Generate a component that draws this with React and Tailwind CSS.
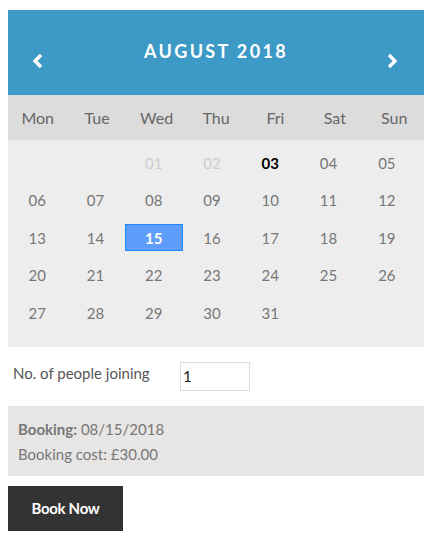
const days = ['Mon', 'Tue', 'Wed', 'Thu', 'Fri', 'Sat', 'Sun'];

const cells = [
  null, null, 1, 2, 3, 4, 5,
  ...Array.from({ length: 26 }, (_, i) => i + 6),
  null, null,
];

const pad = (n) => (n < 10 ? `0${n}` : `${n}`);

const DayCell = ({ n }) => {
  if (n === null) return <div className="h-[37.5px]" />;
  let cls = 'text-[#777]';
  if (n < 3) cls = 'text-[#ccc]';
  if (n === 3) cls = 'text-black font-bold';
  if (n === 15) {
    return (
      <div className="h-[37.5px] flex items-center justify-center">
        <div className="w-[58px] h-[27px] bg-[#5f9dfa] border border-[#1f87ff] text-white font-bold flex items-center justify-center">
          {pad(n)}
        </div>
      </div>
    );
  }
  return (
    <div className={`h-[37.5px] flex items-center justify-center ${cls}`}>{pad(n)}</div>
  );
};

const Chevron = ({ flip }) => (
  <svg width="12" height="16" viewBox="0 0 12 16" className={flip ? 'rotate-180' : ''}>
    <path d="M9 2 L3 8 L9 14" fill="none" stroke="white" strokeWidth="3.4" />
  </svg>
);

export default function App() {
  return (
    <div className="bg-white min-h-[540px] pl-2 pr-[10px] pt-[10px]" style={{ fontFamily: 'Lato, "Open Sans", sans-serif' }}>
      <div className="bg-[#3d9ac6] h-[85px] relative flex justify-center">
        <span className="absolute left-[24px] top-[43px]"><Chevron /></span>
        <h2 className="text-white text-[18px] font-bold tracking-[0.13em] pt-[32px] leading-none">AUGUST 2018</h2>
        <span className="absolute right-[26px] top-[43px]"><Chevron flip /></span>
      </div>
      <div className="bg-[#dcdcdc] h-[45px] grid grid-cols-7 items-center text-[16px] text-[#666]">
        {days.map((d) => (
          <div key={d} className="text-center">{d}</div>
        ))}
      </div>
      <div className="bg-[#ededed] pt-[4px] pb-[15px] pr-[8px] grid grid-cols-7 text-[15px]">
        {cells.map((n, i) => (
          <DayCell key={i} n={n} />
        ))}
      </div>
      <div className="flex items-start pt-[15px] pl-[5px] h-[59px]">
        <label className="text-[15px] text-[#555] w-[167px]">No. of people joining</label>
        <input
          type="text"
          defaultValue="1"
          className="w-[70px] h-[29px] border border-[#ddd] px-[2px] text-[15px] text-[#222] bg-white"
        />
      </div>
      <div className="bg-[#e7e6e5] h-[70px] px-[10px] pt-[11px] text-[15px] text-[#777] leading-[25px]">
        <div><span className="font-bold">Booking:</span> 08/15/2018</div>
        <div>Booking cost: £30.00</div>
      </div>
      <button className="mt-[10px] bg-[#333] text-white font-bold text-[15px] w-[115px] h-[45px] tracking-[-0.02em]">
        Book Now
      </button>
    </div>
  );
}
